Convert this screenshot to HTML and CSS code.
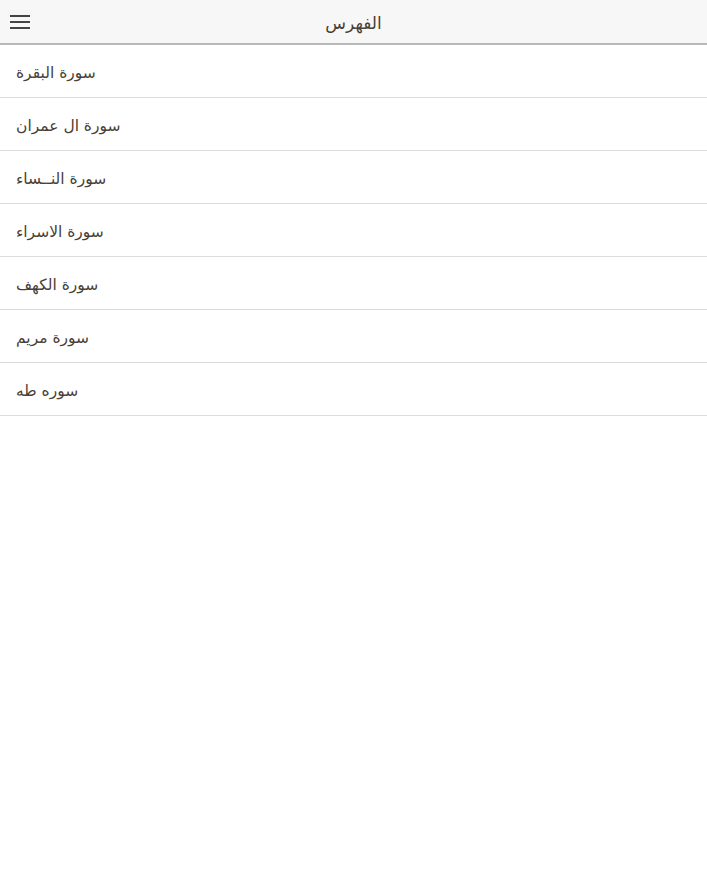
FILE: index.html
```html
<!DOCTYPE html>
<html lang="ar">
<head>
<meta charset="utf-8">
<link rel="stylesheet" href="styles.css">
</head>
<body>
<header class="topbar">
  <button class="menu-btn" aria-label="menu">
    <svg width="20" height="16" viewBox="0 0 20 16"><rect x="0" y="1" width="20" height="2" fill="#444"/><rect x="0" y="7" width="20" height="2" fill="#444"/><rect x="0" y="13" width="20" height="2" fill="#444"/></svg>
  </button>
  <h1 class="title">الفهرس</h1>
</header>
<ul class="list">
  <li class="item">سورة البقرة</li>
  <li class="item">سورة ال عمران</li>
  <li class="item">سورة النــساء</li>
  <li class="item">سورة الاسراء</li>
  <li class="item">سورة الكهف</li>
  <li class="item">سورة مريم</li>
  <li class="item">سوره طه</li>
</ul>
</body>
</html>
```
FILE: styles.css
```css
html, body { margin: 0; padding: 0; background: #fff; }
body { font-family: "DejaVu Sans", "Noto Sans", sans-serif; color: #444; }
.topbar {
  height: 43px;
  background: #f7f7f7;
  border-bottom: 2px solid #b8b8b8;
  display: flex;
  align-items: center;
  justify-content: center;
  position: relative;
}
.menu-btn {
  position: absolute;
  left: 10px;
  top: 14px;
  border: 0; padding: 0; background: none;
  width: 20px; height: 16px;
  display: block;
}
.menu-btn svg { display: block; }
.title {
  margin: 3px 0 0 0;
  font-size: 17px;
  font-weight: normal;
  color: #4a3f35;
  direction: rtl;
}
.list { list-style: none; margin: 0; padding: 0; }
.item {
  height: 52px;
  box-sizing: border-box;
  height: 53px;
  border-bottom: 1px solid #dcdcdc;
  display: flex;
  align-items: center;
  justify-content: flex-end;
  direction: rtl;
  padding: 3px 16px 0 16px;
  font-size: 15.5px;
  color: #4a3f35;
}
```
